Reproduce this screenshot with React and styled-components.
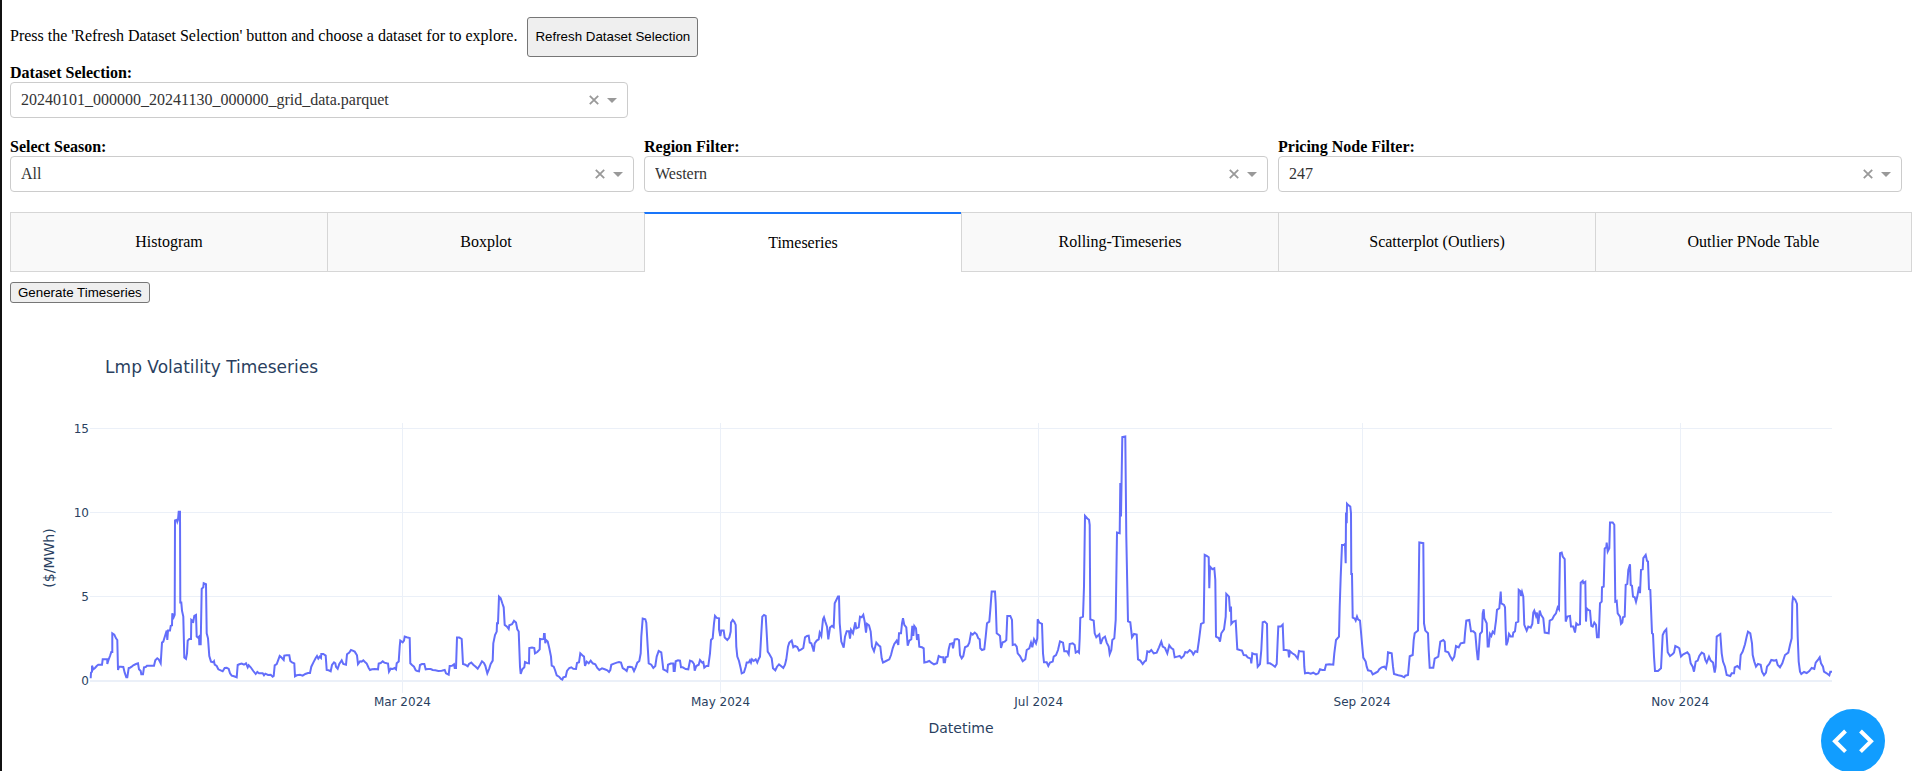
import React, { useLayoutEffect, useRef, useState } from "react";
import styled, { createGlobalStyle } from "styled-components";

const GlobalStyle = createGlobalStyle`
  *, *::before, *::after { box-sizing: border-box; }
  body {
    margin: 0;
    background: #fff;
    color: #000;
    font-family: "Liberation Serif", "Times New Roman", serif;
    font-size: 16px;
    line-height: 18px;
  }
`;

const Page = styled.main`
  min-height: 100vh;
  padding: 17px 2px 0 8px;
  border-left: 2px solid #111;
`;

const Intro = styled.div`
  display: flex;
  align-items: baseline;
  gap: 10px;
  margin-bottom: 7px;
`;

const Prompt = styled.p`
  margin: 0;
`;

const Button = styled.button`
  height: ${(p) => (p.$tall ? "40px" : "21px")};
  padding: 0 7px;
  border: 1px solid #767676;
  border-radius: 3px;
  background: #efefef;
  color: #000;
  font-family: "Liberation Sans", Arial, sans-serif;
  font-size: 13.333px;
  line-height: 16px;
  white-space: nowrap;
`;

const DatasetPicker = styled.section`
  width: 32.5%;
  margin-bottom: 20px;
`;

const Filters = styled.section`
  display: grid;
  grid-template-columns: repeat(3, 1fr);
  gap: 10px;
  padding-right: 10px;
  margin-bottom: 20px;
`;

const FieldLabel = styled.label`
  display: block;
  font-weight: bold;
`;

const SelectBox = styled.div`
  position: relative;
  height: 36px;
`;

const Select = styled.select`
  width: 100%;
  height: 100%;
  padding: 0 52px 0 10px;
  appearance: none;
  border: 1px solid #ccc;
  border-radius: 4px;
  background: #fff;
  color: #333;
  font: inherit;
`;

const SelectTools = styled.div`
  position: absolute;
  inset: 0 11px 0 auto;
  display: flex;
  align-items: center;
  gap: 8px;
  pointer-events: none;
`;

const ClearButton = styled.button`
  display: flex;
  padding: 0;
  border: 0;
  background: none;
  color: #999;
  pointer-events: auto;
`;

const Arrow = styled.span`
  border: 5px solid transparent;
  border-top-color: #999;
  border-bottom-width: 0;
`;

const TabList = styled.div`
  display: grid;
  grid-template-columns: repeat(6, 1fr);
  margin-bottom: 10px;
`;

const Tab = styled.button`
  height: 60px;
  padding: 0;
  border: 1px solid #d6d6d6;
  border-right-width: 0;
  border-radius: 0;
  background: #f9f9f9;
  color: #000;
  font: inherit;

  &:last-child { border-right-width: 1px; }

  &[aria-selected="true"] {
    border-top: 2px solid #1975fa;
    border-bottom: 0;
    background: #fff;
  }
`;

const Figure = styled.figure`
  margin: 20px 0 0;
  height: 448px;
`;

const ChartSvg = styled.svg`
  display: block;
  width: 100%;
  height: 100%;
  font-family: "DejaVu Sans", Verdana, sans-serif;
  fill: #2a3f5f;
`;

const ChartTitle = styled.text`
  font-size: 17px;
`;

const AxisTitle = styled.text`
  font-size: 14px;
`;

const TickLabel = styled.text`
  font-size: 12px;
`;

const GridLine = styled.line`
  stroke: #ebf0f8;
  stroke-width: ${(p) => (p.$zero ? 2 : 1)};
`;

const Trace = styled.path`
  fill: none;
  stroke: #636efa;
  stroke-width: 2;
`;

const DebugButton = styled.button`
  position: fixed;
  right: 29px;
  bottom: -2px;
  width: 64px;
  height: 64px;
  padding: 0;
  border: 0;
  border-radius: 50%;
  background: #119dff;
`;

/* Volatility samples: "position,level" pairs. Each run has its own origin
   on the time axis and its own zero level. */
const RUNS = [
  { start: -30, zero: 573, samples: "32,565 33,548 36,545 36,527 40,538 45,534 50,528 55,524 60,524 66,524 68,508 76,508 82,508 82,522 86,508 90,498 94,486 97,486 97,430 103,434 108,445 112,450 114,540 117,530 122,530 130,531 134,548 139,562 142,562 146,534 150,533 155,530 160,526 168,522 174,520 177,538 182,543 184,553 189,553 192,532 197,531 201,527 210,527 222,527 226,511 232,505 236,508 242,520 246,458 250,455 255,438 260,422 262,450 264,422 270,422 272,408 276,406 277,370 281,382 284,375 285,92 290,90 292,96 294,90 296,66 300,66 301,338 304,338 306,362 310,380 313,503 318,507 321,490 323,452 328,447 333,447 334,390 340,395 343,378 348,375 350,440 354,443 357,440 358,463 362,463 365,297 370,292 371,280 378,283 380,430 384,445 388,498 393,515 400,517 402,514 404,524 410,528 415,538 422,541 428,544 434,534 440,533 446,537 450,550 455,557 462,559 470,562 473,525 478,523 485,521 492,524 498,520 503,532 506,526 512,532 520,543 527,552 532,546 537,550 548,550 552,556 556,551 564,555 572,554 578,560 581,558 584,526 590,522 594,512 599,498 604,502 611,510 613,497 620,496 628,496 631,513 636,517 643,520 645,559 650,556 660,554 668,557 676,552 684,549 690,549 694,530 700,518 707,504 711,498 715,506 719,500 723,504 724,492 730,492 737,497 740,540 746,541 752,544 756,525 762,517 766,520 768,530 773,536 778,522 785,511 790,522 798,524 801,493 808,488 813,480 818,482 824,485 831,496 834,522 840,514 845,515 850,511 855,516 860,521 866,534 870,540 876,538 884,537 894,538 896,521 902,519 908,514 913,518 920,520 924,521 927,545 932,536 938,537 944,534 948,538 950,520 956,515 959,470" },
  { start: 930, zero: 573, samples: "1,452 8,457 12,452 14,440 20,442 29,444 31,520 36,525 42,530 47,541 52,543 57,544 60,525 66,522 73,522 77,538 84,537 92,537 98,540 106,541 115,543 125,542 134,540 138,550 146,554 149,528 156,527 162,523 164,534 168,534 171,443 178,443 185,447 189,522 196,524 203,529 207,522 214,518 220,524 227,530 233,536 240,525 246,514 252,519 256,527 262,550 268,535 272,522 278,512 280,460 285,435 290,425 291,400 294,400 297,320 302,325 307,340 311,352 314,405 321,410 326,417 328,406 336,403 342,393 348,398 352,418 356,425 360,530 362,552 367,538 373,532 375,516 381,519 387,520 388,474 396,473 403,474 405,490 412,486 419,478 420,447 425,448 431,447 432,432 434,432 436,460 438,450 443,455 448,475 453,500 455,527 461,530 465,540 470,556 477,560 483,567 487,569 490,562 497,560 501,543 508,534 514,532 520,536 528,537 531,519 537,517 541,490 547,496 552,500 555,528 560,515 566,520 572,512 578,520 586,523 592,534 598,540 606,535 614,538 622,541 627,546 631,540 634,524 642,521 650,518 657,516 663,518 668,534 674,538 680,543 684,531 690,530 697,532 702,543 707,532 712,518 718,513 722,490 724,440 728,386 736,388 739,398 743,470 746,520 754,524 760,534 766,528 770,500 776,483 784,487 790,538 796,541 802,545 804,524 812,521 820,521 821,543 824,543 827,514 834,511 840,512 843,532 848,532 857,537 865,538 870,512 877,515 882,522 884,542 889,528 896,524 900,510 907,518 910,516 913,533 919,528 925,528 930,490 933,450 938,445 942,400 945,378 950,384 957,385" },
  { start: 1830, zero: 573, samples: "57,418 61,438 64,422 71,422 74,443 82,450 88,443 92,425 93,398 98,390 103,396 107,405 109,470 112,500 117,513 122,535 125,550 132,547 137,530 140,518 146,518 150,511 153,518 156,508 161,513 167,508 172,518 176,507 180,500 184,430 187,380 192,375 197,378 200,430 203,485 208,492 215,505 219,535 226,541 231,530 237,523 243,528 250,534 255,524 259,508 264,470 268,458 275,452 280,472 285,468 292,471 297,482 304,478 310,474 315,442 321,438 326,437 329,458 334,460 339,476 341,485 344,460 350,452 356,448 359,428 364,438 369,388 372,382 376,395 381,410 385,448 390,413 396,408 401,412 404,340 410,328 414,320 417,320 419,400 424,455 431,473 435,440 440,424 447,424 450,446 453,420 459,430 466,397 469,415 476,412 480,380 485,382 490,375 494,395 498,428 501,402 507,406 512,425 516,470 522,484 529,458 535,465 541,470 545,505 549,518 558,513 568,508 573,495 578,475 583,462 590,452 595,465 597,430 603,430 606,400 609,385 613,405 619,412 623,467 628,452 634,448 637,408 640,438 643,408 648,415 651,450 655,432 658,470 666,472 671,475 673,518 680,516 688,513 694,518 702,523 711,520 716,498 724,502 730,502 731,517 735,517 737,502 743,500 746,478 750,462 757,460 759,475 764,448 772,447 777,450 780,495 785,505 790,498 795,472 803,468 808,458 813,430 818,434 824,428 830,433 835,445 839,448 841,475 846,480 853,478 857,440 861,400 868,395 871,360 875,305 885,305 887,340 890,430 897,435" },
  { start: 2730, zero: 783, samples: "0,648 3,684 8,667 14,665 19,660 22,588 31,588 36,600 38,675 45,673 50,680 53,700 60,708 68,724 76,718 80,690 88,685 93,668 97,682 102,658 108,670 112,655 113,598 118,608 126,612 129,700 132,727 140,727 145,738 150,728 158,725 161,710 168,705 174,690 180,664 189,668 193,694 201,694 206,703 209,672 218,670 224,675 227,698 233,694 237,698 239,655 241,594 249,590 252,500 255,288 262,296 267,300 269,315 271,598 281,602 284,640 289,652 298,643 302,672 308,655 315,650 320,668 326,680 329,702 334,690 337,660 343,655 347,600 351,338 359,340 361,190 363,290 367,52 376,50 379,350 384,604 391,607 396,652 402,642 410,644 414,718 421,722 428,732 434,724 438,722 442,694 448,696 454,690 461,700 470,698 477,682 484,665 488,680 495,684 502,700 508,676 514,684 520,688 524,712 532,710 539,708 544,714 551,708 556,696 562,698 569,690 575,695 580,704 586,694 592,696 597,660 603,612 611,608 614,405 620,408 626,412 628,505 630,440 637,448 643,445 646,480 648,650 656,654 660,665 664,640 672,628 677,590 679,522 687,530 690,575 693,560 694,612 700,605 707,603 712,688 719,690 726,692 731,705 738,706 743,712 752,716 754,730 757,700 764,703 770,703 773,740 780,732 784,690 788,607 794,605 801,612 803,730 810,730 818,735 825,740 830,732 833,660 835,620 842,620 848,614 851,690 858,690 865,692 867,712 870,694 877,700 885,705 893,716 897,693" },
  { start: 3630, zero: 573, samples: "0,484 11,485 13,530 15,550 24,548 32,551 40,548 48,553 55,550 60,538 67,540 74,540 78,524 88,523 100,524 103,490 108,450 117,440 119,350 122,260 126,165 132,165 135,162 137,220 138,68 140,100 141,42 145,46 151,50 153,70 154,252 156,252 158,383 164,386 167,392 171,380 174,388 180,392 185,450 190,503 197,515 200,530 204,541 213,543 218,553 226,549 233,545 238,538 245,532 253,530 258,536 262,515 264,487 275,490 279,530 282,552 295,556 305,558 313,562 316,557 324,555 329,499 338,495 341,450 344,430 354,422 356,300 358,158 370,160 372,400 376,422 384,430 386,480 389,533 400,533 404,506 415,500 421,455 430,450 434,455 436,484 445,487 450,498 457,510 463,500 468,468 476,472 482,460 493,458 495,430 499,392 508,390 513,424 520,424 526,430 530,480 533,508 535,508 540,432 546,425 548,370 551,358 553,385 560,400 563,470 566,470 570,432 574,438 578,425 583,430 588,392 591,360 598,355 602,305 604,340 612,345 615,352 617,420 619,466 623,455 627,432 632,440 638,440 640,428 645,424 648,398 655,395 656,300 662,305 663,318 666,306 670,320 673,405 680,422 685,410 692,413 697,402 700,368 703,362 708,378 711,368 715,402 719,362 723,375 730,385 734,428 746,430 749,392 757,388 762,378 768,370 773,352 777,358" },
  { start: 4410, zero: 573, samples: "0,190 5,188 8,200 14,208 17,395 22,380 30,378 33,410 40,410 45,428 49,400 54,405 60,403 62,278 68,273 70,280 76,276 78,395 80,355 85,360 90,362 94,408 98,410 103,398 108,405 111,442 116,442 120,340 125,335 126,292 131,290 134,176 139,172 140,158 143,185 148,175 150,98 158,98 163,105 166,335 170,333 173,370 180,380 183,402 187,398 189,382 194,380 197,285 202,282 205,240 210,223 212,285 216,288 219,320 224,322 228,336 232,320 237,290 240,310 243,240 248,238 250,205 257,195 261,213 264,215 267,298 271,300 276,430 279,432 282,500 285,543 294,543 303,535 308,435 313,425 319,418 323,487 330,498 338,492 342,488 346,468 354,472 358,475 363,500 370,493 382,487 388,495 392,520 398,530 402,545 407,515 413,512 418,498 425,488 432,492 436,510 440,518 447,500 452,512 459,518 464,548 467,530 470,440 481,432 485,490 489,515 495,530 500,555 511,558 515,550 522,550 524,532 532,528 539,535 542,495 548,485 555,463 560,440 564,425 571,430 576,460 578,495 583,515 588,530 594,522 602,524 606,545 612,556 618,548 621,530 628,522 634,510 642,512 649,510 653,525 660,532 667,520 675,495 685,488 690,465 695,445 697,340 699,322 706,330 711,342 713,440 716,515 720,545 724,552 732,546 740,549 748,543 755,534 763,537 767,518 775,508 779,502 783,520 789,530 792,545 800,550 808,556 811,545 816,545" },
];

const TIME_SPAN = 5226;
const LEVELS_PER_DOLLAR = 50.5;

const SERIES = RUNS.flatMap(({ start, zero, samples }) =>
  samples.split(" ").map((pair) => {
    const [x, y] = pair.split(",").map(Number);
    return { t: (start + x) / TIME_SPAN, value: (zero - y) / LEVELS_PER_DOLLAR };
  })
);

const DAYS_SHOWN = 334;
const MONTHS = [
  { day: 60, label: "Mar 2024" },
  { day: 121, label: "May 2024" },
  { day: 182, label: "Jul 2024" },
  { day: 244, label: "Sep 2024" },
  { day: 305, label: "Nov 2024" },
];
const DOLLARS = [15, 10, 5, 0];

const MARGIN = { left: 80, right: 80, top: 100, bottom: 78 };
const CHART_HEIGHT = 448;

function TimeseriesChart() {
  const ref = useRef(null);
  const [width, setWidth] = useState(0);

  useLayoutEffect(() => {
    const measure = () => setWidth(ref.current.clientWidth);
    measure();
    const observer = new ResizeObserver(measure);
    observer.observe(ref.current);
    return () => observer.disconnect();
  }, []);

  const right = width - MARGIN.right;
  const bottom = CHART_HEIGHT - MARGIN.bottom;
  const plotWidth = Math.max(0, right - MARGIN.left);
  const x = (t) => MARGIN.left + t * plotWidth;
  const y = (value) => bottom - 12 - value * 16.85;
  const path = SERIES.map((s, i) => `${i ? "L" : "M"}${x(s.t).toFixed(1)} ${y(s.value).toFixed(1)}`).join("");
  const crisp = (n) => Math.floor(n) + 0.5;

  return (
    <Figure ref={ref}>
      <ChartSvg role="img" aria-label="Lmp Volatility Timeseries">
        <ChartTitle x={width * 0.05} y={50}>Lmp Volatility Timeseries</ChartTitle>
        {MONTHS.map(({ day, label }) => {
          const at = x((day - 0.1) / DAYS_SHOWN);
          return (
            <g key={label}>
              <GridLine x1={crisp(at)} x2={crisp(at)} y1={MARGIN.top} y2={bottom} />
              <TickLabel x={at} y={bottom + 13} textAnchor="middle">{label}</TickLabel>
            </g>
          );
        })}
        {DOLLARS.map((value) => {
          const at = value ? crisp(y(value)) : y(0);
          return (
            <g key={value}>
              <GridLine $zero={value === 0} x1={MARGIN.left} x2={right} y1={at} y2={at} />
              <TickLabel x={MARGIN.left - 1} y={at + 4} textAnchor="end">{value}</TickLabel>
            </g>
          );
        })}
        <Trace d={path} />
        <AxisTitle x={width / 2} y={bottom + 40} textAnchor="middle">Datetime</AxisTitle>
        <AxisTitle transform={`translate(44 ${MARGIN.top + 135}) rotate(-90)`} textAnchor="middle">($/MWh)</AxisTitle>
      </ChartSvg>
    </Figure>
  );
}

function Dropdown({ id, label, value }) {
  return (
    <div>
      <FieldLabel htmlFor={id}>{label}</FieldLabel>
      <SelectBox>
        <Select id={id} defaultValue={value}>
          <option>{value}</option>
        </Select>
        <SelectTools>
          <ClearButton type="button" aria-label={`Clear ${label}`}>
            <svg width="10" height="10" viewBox="0 0 10 10" stroke="currentColor" strokeWidth="1.8">
              <path d="M.8.8l8.4 8.4M9.2.8L.8 9.2" />
            </svg>
          </ClearButton>
          <Arrow />
        </SelectTools>
      </SelectBox>
    </div>
  );
}

const TABS = [
  "Histogram",
  "Boxplot",
  "Timeseries",
  "Rolling-Timeseries",
  "Scatterplot (Outliers)",
  "Outlier PNode Table",
];

export default function App() {
  const [active, setActive] = useState("Timeseries");

  return (
    <>
      <GlobalStyle />
      <Page>
        <Intro>
          <Prompt>Press the 'Refresh Dataset Selection' button and choose a dataset for to explore.</Prompt>
          <Button type="button" $tall>Refresh Dataset Selection</Button>
        </Intro>
        <DatasetPicker>
          <Dropdown id="dataset" label="Dataset Selection:" value="20240101_000000_20241130_000000_grid_data.parquet" />
        </DatasetPicker>
        <Filters>
          <Dropdown id="season" label="Select Season:" value="All" />
          <Dropdown id="region" label="Region Filter:" value="Western" />
          <Dropdown id="node" label="Pricing Node Filter:" value="247" />
        </Filters>
        <TabList role="tablist">
          {TABS.map((name) => (
            <Tab
              key={name}
              type="button"
              role="tab"
              aria-selected={name === active}
              onClick={() => setActive(name)}
            >
              {name}
            </Tab>
          ))}
        </TabList>
        <Button type="button">Generate Timeseries</Button>
        <TimeseriesChart />
        <DebugButton type="button" aria-label="Toggle developer tools">
          <svg width="64" height="64" viewBox="0 0 64 64" fill="none" stroke="#fff" strokeWidth="4">
            <path d="M24.5 22 14 32.3 24.5 42.6M39.5 22 50 32.3 39.5 42.6" />
          </svg>
        </DebugButton>
      </Page>
    </>
  );
}
